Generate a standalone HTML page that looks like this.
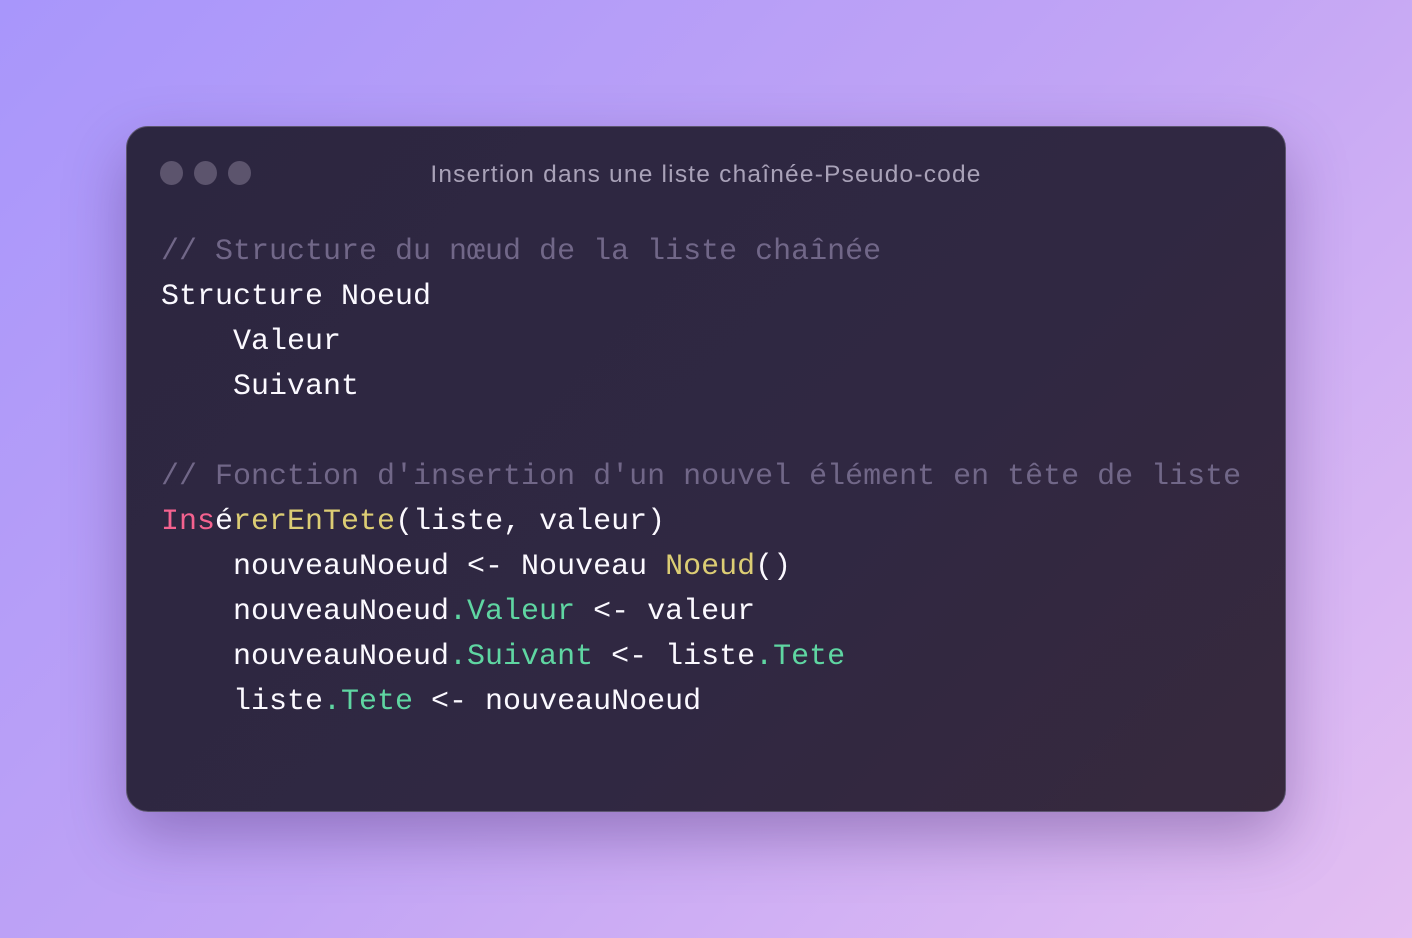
<!DOCTYPE html>
<html><head><meta charset="utf-8"><style>
html,body{margin:0;padding:0;}
body{width:1412px;height:938px;overflow:hidden;background:linear-gradient(135deg,#a896fb 0%,#c1a4f5 50%,#e4bff2 100%);position:relative;font-family:"Liberation Sans",sans-serif;}
.win{position:absolute;left:126px;top:126px;width:1158px;height:684px;border-radius:22px;background:linear-gradient(135deg,#2c2640 0%,#302842 60%,#37293d 100%);border:1px solid #5d5670;box-shadow:0 25px 60px rgba(60,30,100,0.35);}
.dot{position:absolute;top:34px;width:23px;height:24px;border-radius:50%;background:#5c546d;}
.title{position:absolute;top:34px;left:0;width:1158px;text-align:center;color:#a9a2b8;font-size:24.5px;letter-spacing:1.2px;}
pre{position:absolute;left:34px;top:103px;margin:0;font-family:"Liberation Mono",monospace;font-size:30px;line-height:45px;color:#fbf9ff;}
.c{color:#716788}.p{color:#f4628f}.y{color:#dccd74}.g{color:#5fd6a2}
</style></head><body>
<div class="win">
<div class="dot" style="left:33px"></div><div class="dot" style="left:67px"></div><div class="dot" style="left:101px"></div>
<div class="title">Insertion dans une liste chaînée-Pseudo-code</div>
<pre><span class="c">// Structure du nœud de la liste chaînée</span>
Structure Noeud
    Valeur
    Suivant

<span class="c">// Fonction d'insertion d'un nouvel élément en tête de liste</span>
<span class="p">Ins</span>é<span class="y">rerEnTete</span>(liste, valeur)
    nouveauNoeud &lt;- Nouveau <span class="y">Noeud</span>()
    nouveauNoeud<span class="g">.Valeur</span> &lt;- valeur
    nouveauNoeud<span class="g">.Suivant</span> &lt;- liste<span class="g">.Tete</span>
    liste<span class="g">.Tete</span> &lt;- nouveauNoeud</pre>
</div>
</body></html>
